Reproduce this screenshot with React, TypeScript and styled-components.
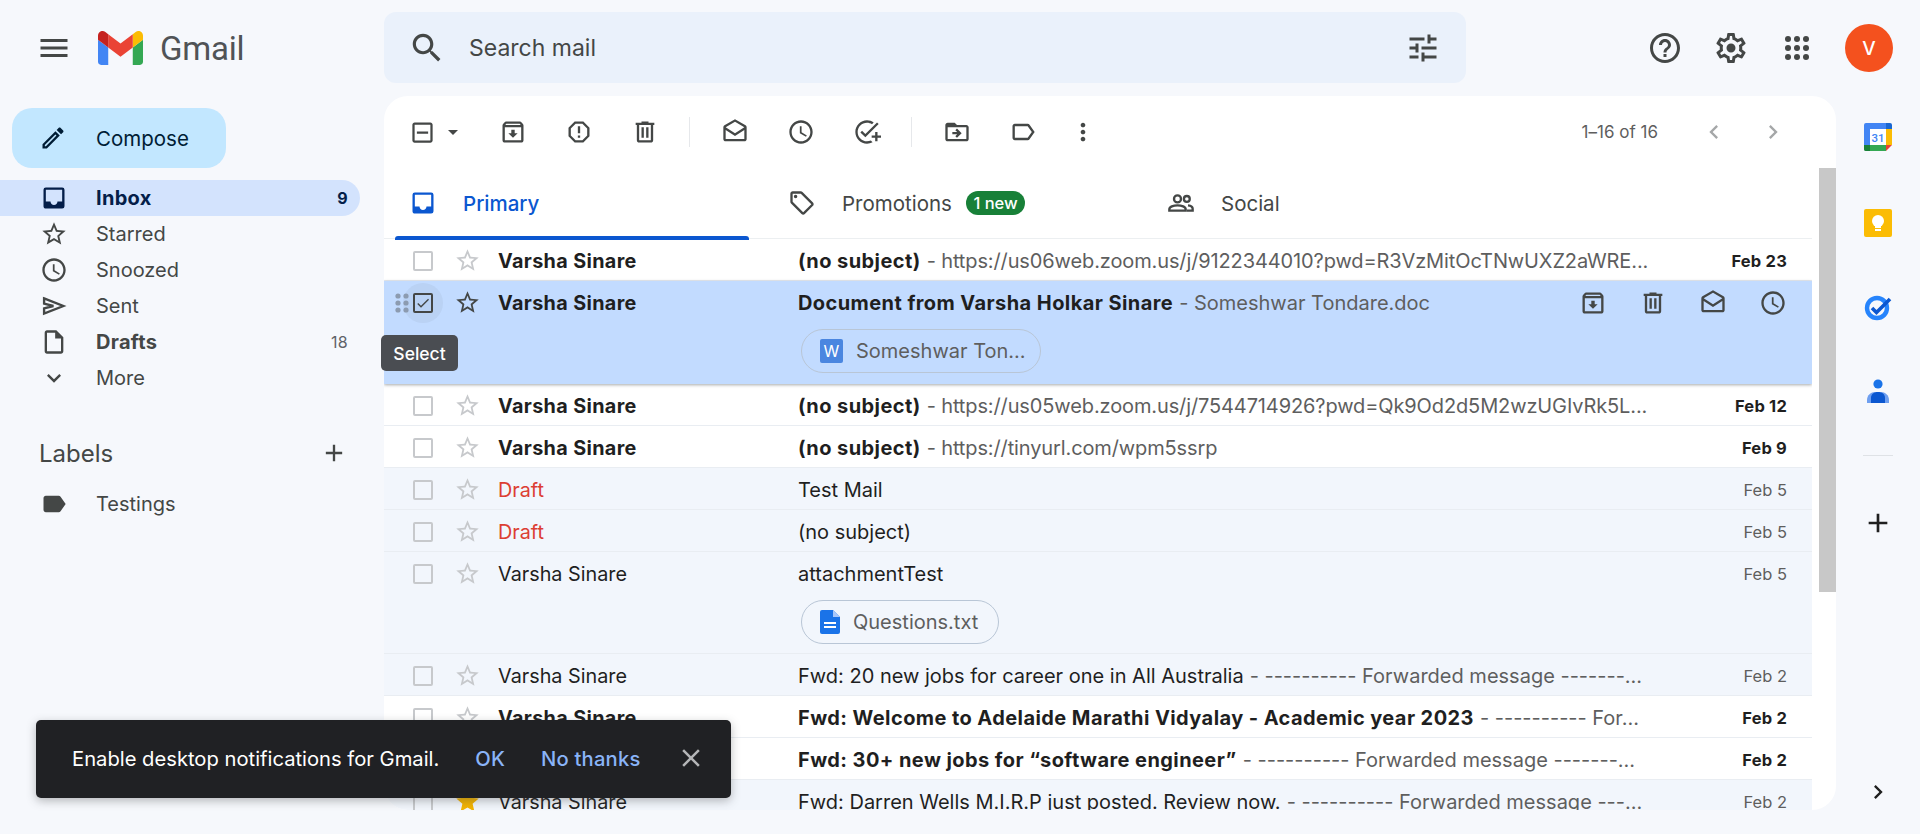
import React from "react";
import styled, { createGlobalStyle } from "styled-components";

const GlobalStyle = createGlobalStyle`
  html, body { margin: 0; padding: 0; background: #f6f8fc; }
  * { box-sizing: border-box; }
`;

const FONT = `Inter, Roboto, "Liberation Sans", sans-serif`;

const P = {
  menu: "M3 18h18v-2H3v2zm0-5h18v-2H3v2zm0-7v2h18V6H3z",
  search: "M15.5 14h-.79l-.28-.27C15.41 12.59 16 11.11 16 9.5 16 5.91 13.09 3 9.5 3S3 5.91 3 9.5 5.91 16 9.5 16c1.61 0 3.09-.59 4.23-1.57l.27.28v.79l5 4.99L20.49 19l-4.99-5zm-6 0C7.01 14 5 11.99 5 9.5S7.01 5 9.5 5 14 7.01 14 9.5 11.99 14 9.5 14z",
  tune: "M3 17v2h6v-2H3zM3 5v2h10V5H3zm10 16v-2h8v-2h-8v-2h-2v6h2zM7 9v2H3v2h4v2h2V9H7zm14 4v-2H11v2h10zm-6-4h2V7h4V5h-4V3h-2v6z",
  help: "M11 18h2v-2h-2v2zm1-16C6.48 2 2 6.48 2 12s4.48 10 10 10 10-4.48 10-10S17.52 2 12 2zm0 18c-4.41 0-8-3.59-8-8s3.59-8 8-8 8 3.59 8 8-3.59 8-8 8zm0-14c-2.21 0-4 1.79-4 4h2c0-1.1.9-2 2-2s2 .9 2 2c0 2-3 1.75-3 5h2c0-2.25 3-2.5 3-5 0-2.21-1.79-4-4-4z",
  gear: "M19.43 12.98c.04-.32.07-.64.07-.98 0-.34-.03-.66-.07-.98l2.11-1.65c.19-.15.24-.42.12-.64l-2-3.46c-.09-.16-.26-.25-.44-.25-.06 0-.12.01-.17.03l-2.49 1c-.52-.4-1.08-.73-1.69-.98l-.38-2.65C14.46 2.18 14.25 2 14 2h-4c-.25 0-.46.18-.49.42l-.38 2.65c-.61.25-1.17.59-1.69.98l-2.49-1c-.06-.02-.12-.03-.18-.03-.17 0-.34.09-.43.25l-2 3.46c-.13.22-.07.49.12.64l2.11 1.65c-.04.32-.07.65-.07.98 0 .33.03.66.07.98l-2.11 1.65c-.19.15-.24.42-.12.64l2 3.46c.09.16.26.25.44.25.06 0 .12-.01.17-.03l2.49-1c.52.4 1.08.73 1.69.98l.38 2.65c.03.24.24.42.49.42h4c.25 0 .46-.18.49-.42l.38-2.65c.61-.25 1.17-.59 1.69-.98l2.49 1c.06.02.12.03.18.03.17 0 .34-.09.43-.25l2-3.46c.12-.22.07-.49-.12-.64l-2.11-1.65zm-1.98-1.71c.04.31.05.52.05.73 0 .21-.02.43-.05.73l-.14 1.13.89.7 1.08.84-.7 1.21-1.27-.51-1.04-.42-.9.68c-.43.32-.84.56-1.25.73l-1.06.43-.16 1.13-.2 1.35h-1.4l-.19-1.35-.16-1.13-1.06-.43c-.43-.18-.83-.41-1.23-.71l-.91-.7-1.06.43-1.27.51-.7-1.21 1.08-.84.89-.7-.14-1.13c-.03-.31-.05-.54-.05-.74s.02-.43.05-.73l.14-1.13-.89-.7-1.08-.84.7-1.21 1.27.51 1.04.42.9-.68c.43-.32.84-.56 1.25-.73l1.06-.43.16-1.13.2-1.35h1.39l.19 1.35.16 1.13 1.06.43c.43.18.83.41 1.23.71l.91.7 1.06-.43 1.27-.51.7 1.21-1.07.85-.89.7.14 1.13zM12 9a3 3 0 1 0 0 6 3 3 0 0 0 0-6z",
  starBorder: "M22 9.24l-7.19-.62L12 2 9.19 8.63 2 9.24l5.46 4.73L5.82 21 12 17.27 18.18 21l-1.63-7.03L22 9.24zM12 15.4l-3.76 2.27 1-4.28-3.32-2.88 4.38-.38L12 6.1l1.71 4.04 4.38.38-3.32 2.88 1 4.28L12 15.4z",
  star: "M12 17.27L18.18 21l-1.64-7.03L22 9.24l-7.19-.61L12 2 9.19 8.63 2 9.24l5.46 4.73L5.82 21z",
  clock: "M11.99 2C6.47 2 2 6.48 2 12s4.47 10 9.99 10C17.52 22 22 17.52 22 12S17.52 2 11.99 2zM12 20c-4.42 0-8-3.58-8-8s3.58-8 8-8 8 3.58 8 8-3.58 8-8 8zm.5-13H11v6l5.25 3.15.75-1.23-4.5-2.67z",
  send: "M3.500 5.500L20 12 3.500 18.500V14l8-2-8-2z",
  file: "M14 2H6c-1.1 0-1.99.9-1.99 2L4 20c0 1.1.89 2 1.99 2H18c1.1 0 2-.9 2-2V8l-6-6zM6 20V4h7v5h5v11H6z",
  expand: "M16.59 8.59L12 13.17 7.41 8.59 6 10l6 6 6-6z",
  inbox: "M19 3H5a2 2 0 0 0-2 2v14c0 1.1.9 2 2 2h14a2 2 0 0 0 2-2V5a2 2 0 0 0-2-2zm0 12h-4c0 1.66-1.35 3-3 3s-3-1.34-3-3H5V5h14v10z",
  edit: "M3 17.25V21h3.75L17.81 9.94l-3.75-3.75L3 17.25zM5.92 19H5v-.92l9.06-9.06.92.92L5.92 19zM20.71 5.63l-2.34-2.34c-.2-.2-.45-.29-.71-.29s-.51.1-.7.29l-1.83 1.83 3.75 3.75 1.83-1.83c.39-.39.39-1.02 0-1.41z",
  add: "M19 13h-6v6h-2v-6H5v-2h6V5h2v6h6v2z",
  label: "M17.63 5.84C17.27 5.33 16.67 5 16 5L5 5.01C3.9 5.01 3 5.9 3 7v10c0 1.1.9 1.99 2 1.99L16 19c.67 0 1.27-.33 1.63-.84L22 12l-4.37-6.16z",
  labelLine: "M17.63 5.84C17.27 5.33 16.67 5 16 5L5 5.01C3.9 5.01 3 5.9 3 7v10c0 1.1.9 1.99 2 1.99L16 19c.67 0 1.27-.33 1.63-.84L22 12l-4.37-6.16zM16 17H5V7h11l3.55 5L16 17z",
  archive: "M20.54 5.23l-1.39-1.68C18.88 3.21 18.47 3 18 3H6c-.47 0-.88.21-1.16.55L3.46 5.23C3.17 5.57 3 6.02 3 6.5V19c0 1.1.9 2 2 2h14c1.1 0 2-.9 2-2V6.5c0-.48-.17-.93-.46-1.27zM6.24 5h11.52l.83 1H5.42l.82-1zM5 19V8h14v11H5zm8.45-9h-2.9v3H8l4 4 4-4h-2.55z",
  report: "M15.73 3H8.27L3 8.27v7.46L8.27 21h7.46L21 15.73V8.27L15.73 3zM19 14.9L14.9 19H9.1L5 14.9V9.1L9.1 5h5.8L19 9.1v5.8zM11 7h2v6h-2zM11 15h2v2h-2z",
  trash: "M15 4V3H9v1H4v2h1v13c0 1.1.9 2 2 2h10c1.1 0 2-.9 2-2V6h1V4h-5zm2 15H7V6h10v13zM9 8h2v9H9zm4 0h2v9h-2z",
  mailOpen: "M21.99 8c0-.72-.37-1.35-.94-1.7L12 1 2.95 6.3C2.38 6.65 2 7.28 2 8v10c0 1.1.9 2 2 2h16c1.1 0 2-.9 2-2l-.01-10zM12 3.32L19.99 8v.01L12 13 4 8l8-4.68zM4 18v-7.66l8 5.02 7.99-4.99L20 18H4z",
  addTask: "M22 5.18L10.59 16.6l-4.24-4.24 1.41-1.41 2.83 2.83 10-10L22 5.18zM12 20c-4.41 0-8-3.59-8-8s3.59-8 8-8c1.57 0 3.04.46 4.28 1.25l1.45-1.45C16.1 2.67 14.13 2 12 2 6.48 2 2 6.48 2 12s4.48 10 10 10c1.73 0 3.36-.44 4.78-1.22l-1.5-1.5c-1 .46-2.11.72-3.28.72zm7-5h-3v2h3v3h2v-3h3v-2h-3v-3h-2v3z",
  move: "M20 6h-8l-2-2H4c-1.1 0-1.99.9-1.99 2L2 18c0 1.1.9 2 2 2h16c1.1 0 2-.9 2-2V8c0-1.1-.9-2-2-2zm0 12H4V8h16v10zm-8.01-9l-1.41 1.41L12.16 12H8v2h4.16l-1.59 1.59L11.99 17 16 13.01 11.99 9z",
  more: "M12 8c1.1 0 2-.9 2-2s-.9-2-2-2-2 .9-2 2 .9 2 2 2zm0 2c-1.1 0-2 .9-2 2s.9 2 2 2 2-.9 2-2-.9-2-2-2zm0 6c-1.1 0-2 .9-2 2s.9 2 2 2 2-.9 2-2-.9-2-2-2z",
  left: "M15.41 7.41L14 6l-6 6 6 6 1.41-1.41L10.83 12z",
  right: "M10 6L8.59 7.41 13.17 12l-4.58 4.59L10 18l6-6z",
  tag: "M21.41 11.58l-9-9C12.05 2.22 11.55 2 11 2H4c-1.1 0-2 .9-2 2v7c0 .55.22 1.05.59 1.42l9 9c.36.36.86.58 1.41.58s1.05-.22 1.41-.59l7-7c.37-.36.59-.86.59-1.41s-.23-1.06-.59-1.42zM13 20.01L4 11V4h7v-.01l9 9-7 7.02zM6.5 5a1.5 1.5 0 1 0 0 3 1.5 1.5 0 0 0 0-3z",
  minusBox: "M19 3H5c-1.1 0-2 .9-2 2v14c0 1.1.9 2 2 2h14c1.1 0 2-.9 2-2V5c0-1.1-.9-2-2-2zm0 16H5V5h14v14zM7 11h10v2H7z",
  close: "M19 6.41L17.59 5 12 10.59 6.41 5 5 6.41 10.59 12 5 17.59 6.41 19 12 13.41 17.59 19 19 17.59 13.41 12z",
  caret: "M7 10l5 5 5-5z",
  check: "M9 16.17L4.83 12l-1.42 1.41L9 19 21 7l-1.41-1.41z",
};

const Svg = styled.svg<{ $size: number; $color?: string; $line?: boolean }>`
  width: ${(p) => p.$size}px;
  height: ${(p) => p.$size}px;
  flex: none;
  display: block;
  fill: ${(p) => (p.$line ? "none" : p.$color || "#444746")};
  stroke: ${(p) => (p.$line ? p.$color || "#444746" : "none")};
  stroke-width: ${(p) => (p.$line ? 2 : 0)};
`;

const Icon = ({ d, size = 28, color, line }: { d: string; size?: number; color?: string; line?: boolean }) => (
  <Svg viewBox="0 0 24 24" $size={size} $color={color} $line={line}>
    <path d={d} />
  </Svg>
);

const Page = styled.div`
  position: relative;
  width: 1920px;
  height: 834px;
  overflow: hidden;
  background: #f6f8fc;
  font-family: ${FONT};
  font-feature-settings: "calt" 0;
  color: #1f1f1f;
  display: grid;
  grid-template-columns: 384px 1452px 84px;
  grid-template-rows: 96px 714px;
`;

const Header = styled.header`
  grid-column: 1 / -1;
  display: flex;
  align-items: center;
`;

const Brand = styled.div`
  width: 384px;
  display: flex;
  align-items: center;
  padding-left: 36px;
`;

const BrandName = styled.span`
  font-family: Roboto, sans-serif;
  font-size: 33px;
  color: #505356;
  margin-left: 17px;
  letter-spacing: -0.2px;
`;

const LogoBox = styled.div`
  margin-left: 26px;
`;

const SearchBar = styled.div`
  width: 1082px;
  height: 71px;
  margin-bottom: 1px;
  background: #eaf1fb;
  border-radius: 12px;
  display: flex;
  align-items: center;
  padding: 0 25px 0 24px;
`;

const SearchText = styled.span`
  font-size: 23px;
  color: #444746;
  margin: 1px 0 0 23px;
  flex: 1;
`;

const HeaderIcons = styled.div`
  display: flex;
  align-items: center;
  margin-left: 181px;
  gap: 30px;
`;

const Avatar = styled.div`
  width: 48px;
  height: 48px;
  border-radius: 50%;
  background: #f4511e;
  color: #fff;
  font-size: 19px;
  font-weight: 500;
  display: flex;
  align-items: center;
  justify-content: center;
`;

const Sidebar = styled.nav`
  padding-top: 12px;
`;

const Compose = styled.div`
  margin-left: 12px;
  width: 214px;
  height: 60px;
  background: #c2e7ff;
  border-radius: 20px;
  display: flex;
  align-items: center;
  padding-left: 27px;
  gap: 29px;
  font-size: 20.5px;
  color: #001d35;
`;

const NavList = styled.div`
  margin-top: 12px;
`;

const NavItem = styled.div<{ $active?: boolean; $bold?: boolean }>`
  width: 360px;
  height: 36px;
  padding: 0 12px 0 40px;
  display: flex;
  align-items: center;
  gap: 28px;
  font-size: 20px;
  border-radius: 0 18px 18px 0;
  color: ${(p) => (p.$active ? "#041e49" : "#444746")};
  font-weight: ${(p) => (p.$bold ? 700 : 400)};
  letter-spacing: ${(p) => (p.$bold ? "0.3px" : "0")};
  background: ${(p) => (p.$active ? "#d3e3fd" : "transparent")};
`;

const NavLabel = styled.span`
  flex: 1;
`;

const NavCount = styled.span<{ $bold?: boolean }>`
  font-size: 16px;
  font-weight: ${(p) => (p.$bold ? 700 : 400)};
  color: ${(p) => (p.$bold ? "#041e49" : "#5f6368")};
`;

const LabelsHead = styled.div`
  margin-top: 35px;
  padding: 0 12px 0 39px;
  width: 360px;
  height: 44px;
  display: flex;
  align-items: center;
  justify-content: space-between;
  font-size: 24px;
  color: #444746;
`;

const LabelsList = styled.div`
  margin-top: 11px;
`;

const Panel = styled.main`
  background: #fff;
  border-radius: 24px 24px 24px 24px;
  overflow: hidden;
  display: flex;
  flex-direction: column;
  position: relative;
`;

const Toolbar = styled.div`
  height: 72px;
  flex: none;
  display: flex;
  align-items: center;
`;

const SelectGroup = styled.div`
  width: 96px;
  display: flex;
  align-items: center;
  padding-left: 25px;
  gap: 5px;
`;

const ToolSlot = styled.div<{ $w?: number }>`
  width: ${(p) => p.$w || 66}px;
  display: flex;
  justify-content: center;
  flex: none;
`;

const ToolDivider = styled.div`
  width: 1px;
  height: 30px;
  background: #e6e8eb;
  margin: 0 12px 0 11px;
  flex: none;
`;

const Pager = styled.div`
  margin-left: auto;
  display: flex;
  align-items: center;
  padding-right: 34px;
`;

const PagerText = styled.span`
  font-size: 17px;
  color: #5e5e5e;
  margin-right: 26px;
`;

const Body = styled.div`
  flex: 1;
  min-height: 0;
  display: flex;
  justify-content: space-between;
`;

const ListColumn = styled.div`
  width: 1428px;
  overflow: hidden;
`;

const ScrollTrack = styled.div`
  width: 17px;
  flex: none;
`;

const ScrollThumb = styled.div`
  height: 424px;
  background: #c8c8c8;
`;

const Tabs = styled.div`
  height: 71px;
  display: grid;
  grid-template-columns: repeat(3, 379px);
  border-bottom: 1px solid #eceff1;
`;

const Tab = styled.div<{ $active?: boolean }>`
  position: relative;
  display: flex;
  align-items: center;
  padding: 0 0 0 25px;
  font-size: 20.5px;
  font-weight: ${(p) => (p.$active ? 500 : 400)};
  color: ${(p) => (p.$active ? "#0b57d0" : "#444746")};
  ${(p) =>
    p.$active &&
    `&::after {
      content: "";
      position: absolute;
      left: 11px;
      right: 14px;
      bottom: -2px;
      height: 4px;
      background: #0b57d0;
      border-radius: 3px 3px 0 0;
      z-index: 2;
    }`}
`;

const TabLabel = styled.span`
  margin-left: 26px;
`;

const NewBadge = styled.span`
  margin-left: 14px;
  background: #188038;
  color: #fff;
  font-size: 16.5px;
  font-weight: 500;
  line-height: 24px;
  padding: 0 7.5px;
  border-radius: 12px;
`;

const Row = styled.div<{ $unread?: boolean; $selected?: boolean; $att?: boolean }>`
  position: relative;
  height: ${(p) => (p.$selected ? 103 : p.$att ? 102 : 42)}px;
  display: grid;
  grid-template-columns: 114px 300px 862px 1fr;
  grid-template-rows: 43px 1fr;
  padding-right: 25px;
  border-bottom: 1px solid #e9edf2;
  background: ${(p) => (p.$selected ? "#c2dbff" : p.$unread ? "#fff" : "#f2f6fc")};
  ${(p) => p.$selected && `z-index: 1; box-shadow: 0 1px 3px rgba(60,64,67,.45); border-bottom: 0;`}
`;

const Controls = styled.div`
  display: flex;
  align-items: center;
  padding-left: 29px;
`;

const StarSlot = styled.div`
  margin-left: 21px;
`;

const Check = styled.span<{ $on?: boolean }>`
  position: relative;
  width: 20px;
  height: 20px;
  flex: none;
  border: 2px solid ${(p) => (p.$on ? "#444746" : "#c7c9cc")};
  border-radius: 2px;
  display: flex;
  align-items: center;
  justify-content: center;
`;

const CheckHalo = styled.span`
  position: absolute;
  left: -12px;
  top: -12px;
  width: 40px;
  height: 40px;
  border-radius: 50%;
  background: rgba(60, 64, 67, 0.06);
`;

const DragDots = styled.svg`
  position: absolute;
  left: -20px;
  top: -2px;
  width: 14px;
  height: 20px;
  fill: #8c9bb0;
`;

const Sender = styled.div<{ $unread?: boolean; $draft?: boolean }>`
  display: flex;
  align-items: center;
  font-size: 19.8px;
  font-weight: ${(p) => (p.$unread ? 700 : 400)};
  letter-spacing: ${(p) => (p.$unread ? "0.35px" : "0")};
  color: ${(p) => (p.$draft ? "#dc3e33" : "#1f1f1f")};
`;

const Content = styled.div`
  display: flex;
  align-items: center;
  font-size: 20px;
  white-space: nowrap;
  overflow: hidden;
  min-width: 0;
`;

const Subject = styled.span<{ $unread?: boolean }>`
  font-weight: ${(p) => (p.$unread ? 700 : 400)};
  letter-spacing: ${(p) => (p.$unread ? "0.42px" : "0")};
  color: #1f1f1f;
  flex: none;
`;

const Snippet = styled.span<{ $tight?: boolean }>`
  color: #5e5e5e;
  margin-left: 6px;
  letter-spacing: ${(p) => (p.$tight ? "-0.12px" : "0")};
  overflow: hidden;
  text-overflow: ellipsis;
`;

const DateCell = styled.div<{ $unread?: boolean }>`
  display: flex;
  align-items: center;
  justify-content: flex-end;
  font-size: 16.5px;
  font-weight: ${(p) => (p.$unread ? 700 : 400)};
  letter-spacing: ${(p) => (p.$unread ? "0.2px" : "0")};
  color: ${(p) => (p.$unread ? "#1f1f1f" : "#5e5e5e")};
`;

const RowActions = styled.div`
  position: absolute;
  right: 25px;
  top: 8px;
  display: flex;
  gap: 32px;
`;

const Chip = styled.div<{ $w: number }>`
  grid-column: 3;
  grid-row: 2;
  margin: 5px 0 0 3px;
  width: ${(p) => p.$w}px;
  height: 44px;
  border: 1px solid #b9c6d6;
  border-radius: 22px;
  display: flex;
  align-items: center;
  padding-left: 18px;
  gap: 13px;
  font-size: 20px;
  color: #5e5e5e;
  white-space: nowrap;
`;

const WordBadge = styled.span`
  width: 23px;
  height: 24px;
  border-radius: 2px;
  background: #4a86e0;
  color: #fff;
  font-size: 16px;
  display: flex;
  align-items: center;
  justify-content: center;
`;

const Rail = styled.aside`
  display: flex;
  flex-direction: column;
  align-items: center;
  padding: 27px 0 0 0;
  position: relative;
`;

const RailItem = styled.div<{ $h: number }>`
  height: ${(p) => p.$h}px;
  display: flex;
  align-items: flex-start;
  justify-content: center;
`;

const RailDivider = styled.div`
  width: 30px;
  height: 1px;
  background: #dfe2e6;
  margin-bottom: 51px;
`;

const RailChevron = styled.div`
  margin-top: 211px;
`;

const Tooltip = styled.div`
  position: absolute;
  left: 381px;
  top: 335px;
  width: 77px;
  height: 36px;
  background: #4a4d52;
  border-radius: 5px;
  color: #fff;
  font-size: 17.5px;
  font-weight: 500;
  display: flex;
  align-items: center;
  justify-content: center;
  z-index: 3;
`;

const Toast = styled.div`
  position: absolute;
  left: 36px;
  top: 720px;
  width: 695px;
  height: 78px;
  padding: 0 0 2px 36px;
  background: #202124;
  border-radius: 5px;
  box-shadow: 0 3px 10px rgba(60, 64, 67, 0.35);
  color: #fff;
  font-size: 20.2px;
  display: flex;
  align-items: center;
  white-space: nowrap;
  z-index: 4;
`;

const ToastLink = styled.span<{ $gap: number }>`
  color: #8ab4f8;
  font-weight: 500;
  letter-spacing: 0.2px;
  margin-left: ${(p) => p.$gap}px;
`;

const ToastClose = styled.div`
  margin-left: 36px;
`;

const rows = [
  { sender: "Varsha Sinare", subject: "(no subject)", snippet: "https://us06web.zoom.us/j/9122344010?pwd=R3VzMitOcTNwUXZ2aWRE...", date: "Feb 23", unread: true },
  { sender: "Varsha Sinare", subject: "Document from Varsha Holkar Sinare", snippet: "Someshwar Tondare.doc", date: "", unread: true, selected: true },
  { sender: "Varsha Sinare", subject: "(no subject)", snippet: "https://us05web.zoom.us/j/7544714926?pwd=Qk9Od2d5M2wzUGIvRk5L...", date: "Feb 12", unread: true },
  { sender: "Varsha Sinare", subject: "(no subject)", snippet: "https://tinyurl.com/wpm5ssrp", date: "Feb 9", unread: true },
  { sender: "Draft", subject: "Test Mail", date: "Feb 5", draft: true },
  { sender: "Draft", subject: "(no subject)", date: "Feb 5", draft: true },
  { sender: "Varsha Sinare", subject: "attachmentTest", date: "Feb 5", chip: "txt" },
  { sender: "Varsha Sinare", subject: "Fwd: 20 new jobs for career one in All Australia", snippet: "---------- Forwarded message -------...", date: "Feb 2" },
  { sender: "Varsha Sinare", subject: "Fwd: Welcome to Adelaide Marathi Vidyalay - Academic year 2023", snippet: "---------- For...", date: "Feb 2", unread: true },
  { sender: "Varsha Sinare", subject: "Fwd: 30+ new jobs for “software engineer”", snippet: "---------- Forwarded message -------...", date: "Feb 2", unread: true },
  { sender: "Varsha Sinare", subject: "Fwd: Darren Wells M.I.R.P just posted. Review now.", snippet: "---------- Forwarded message ---...", date: "Feb 2", starred: true },
] as Array<{
  sender: string;
  subject: string;
  snippet?: string;
  date: string;
  unread?: boolean;
  selected?: boolean;
  draft?: boolean;
  chip?: string;
  starred?: boolean;
}>;

const navItems = [
  { label: "Inbox", d: P.inbox, count: "9", active: true, bold: true, color: "#041e49" },
  { label: "Starred", d: P.starBorder },
  { label: "Snoozed", d: P.clock },
  { label: "Sent", d: P.send, line: true },
  { label: "Drafts", d: P.file, count: "18", bold: true },
  { label: "More", d: P.expand },
];

const GmailLogo = () => (
  <svg width="45" height="34" viewBox="52 42 88 66" style={{ display: "block" }}>
    <path fill="#4285f4" d="M58 108h14V74L52 59v43c0 3.32 2.69 6 6 6" />
    <path fill="#34a853" d="M120 108h14c3.32 0 6-2.69 6-6V59l-20 15" />
    <path fill="#fbbc04" d="M120 48v26l20-15v-8c0-7.42-8.47-11.65-14.4-7.2" />
    <path fill="#ea4335" d="M72 74V48l24 18 24-18v26L96 92" />
    <path fill="#c5221f" d="M52 51v8l20 15V48l-5.6-4.2c-5.94-4.45-14.4-.22-14.4 7.2" />
  </svg>
);

const CalendarIcon = () => (
  <svg width="28" height="28" viewBox="0 0 28 28">
    <path fill="#4285f4" d="M2 0h20v6H6v16H0V2a2 2 0 0 1 2-2z" />
    <path fill="#1967d2" d="M22 0h4a2 2 0 0 1 2 2v4h-6z" />
    <path fill="#fbbc04" d="M22 6h6v16h-6z" />
    <path fill="#34a853" d="M6 22h16v6H2a2 2 0 0 1-2-2v-4z" />
    <path fill="#188038" d="M0 22h6v6H2a2 2 0 0 1-2-2z" />
    <path fill="#ea4335" d="M22 22h6l-6 6z" />
    <rect x="6" y="6" width="16" height="16" fill="#fff" />
    <text x="14" y="19" textAnchor="middle" fontSize="11.5" fontWeight="500" fontFamily="Roboto, sans-serif" fill="#4285f4">31</text>
  </svg>
);

const KeepIcon = () => (
  <svg width="28" height="28" viewBox="0 0 28 28">
    <rect width="28" height="28" rx="2" fill="#fbbc04" />
    <circle cx="14" cy="12" r="6" fill="#fff" />
    <rect x="11" y="17" width="6" height="2" fill="#fff" />
    <rect x="11" y="20" width="6" height="2" fill="#fff" />
  </svg>
);

const TasksIcon = () => (
  <svg width="28" height="28" viewBox="0 0 28 28">
    <circle cx="13" cy="15" r="10" fill="none" stroke="#2684fc" strokeWidth="4.4" />
    <path d="M8 15l4.5 4.5L26 6" fill="none" stroke="#0b57d0" strokeWidth="3.6" />
  </svg>
);

const ContactsIcon = () => (
  <svg width="28" height="28" viewBox="0 0 28 28">
    <circle cx="14" cy="7" r="4.6" fill="#1a73e8" />
    <path d="M3 26v-3c0-5 4-8 8-8h6c4 0 8 3 8 8v3z" fill="#6e9ff0" />
    <path d="M7 26v-5c0-4 3-6 7-6s7 2 7 6v5z" fill="#0b57d0" />
  </svg>
);

const DocIcon = () => (
  <svg width="20" height="24" viewBox="0 0 20 24">
    <path fill="#1a73e8" d="M2 0h11l7 7v15a2 2 0 0 1-2 2H2a2 2 0 0 1-2-2V2a2 2 0 0 1 2-2z" />
    <path fill="#fff" d="M4 12h12v2H4zM4 16h12v2H4z" />
    <path fill="#a8c7fa" d="M13 0l7 7h-7z" />
  </svg>
);

const SocialIcon = () => (
  <Svg viewBox="0 0 24 24" $size={28} $color="none">
    <g fill="none" stroke="#444746" strokeWidth="2">
      <circle cx="9" cy="8.5" r="3" />
      <path d="M2 18.5v-1.2c0-2 3.5-3.3 7-3.3s7 1.300 7 3.300v1.200z" />
      <circle cx="17" cy="8.500" r="2.500" />
      <path d="M18 14c2 .2 4 1.300 4 3v1.500h-5" />
    </g>
  </Svg>
);

const Dots = () => (
  <DragDots viewBox="0 0 14 20">
    {[3, 10, 17].map((y) =>
      [3, 11].map((x) => <circle key={`${x}-${y}`} cx={x} cy={y} r="2.600" />)
    )}
  </DragDots>
);

const AppsIcon = () => (
  <Svg viewBox="0 0 24 24" $size={36}>
    {[6, 12, 18].map((y) =>
      [6, 12, 18].map((x) => <circle key={`${x}-${y}`} cx={x} cy={y} r="2" />)
    )}
  </Svg>
);

export default function App() {
  return (
    <Page>
      <GlobalStyle />
      <Header>
        <Brand>
          <Icon d={P.menu} size={36} />
          <LogoBox>
            <GmailLogo />
          </LogoBox>
          <BrandName>Gmail</BrandName>
        </Brand>
        <SearchBar>
          <Icon d={P.search} size={38} />
          <SearchText>Search mail</SearchText>
          <Icon d={P.tune} size={36} />
        </SearchBar>
        <HeaderIcons>
          <Icon d={P.help} size={36} />
          <Icon d={P.gear} size={36} />
          <AppsIcon />
          <Avatar>V</Avatar>
        </HeaderIcons>
      </Header>

      <Sidebar>
        <Compose>
          <Icon d={P.edit} size={28} color="#001d35" />
          Compose
        </Compose>
        <NavList>
          {navItems.map((n) => (
            <NavItem key={n.label} $active={n.active} $bold={n.bold}>
              <Icon d={n.d} size={28} color={n.color} line={n.line} />
              <NavLabel>{n.label}</NavLabel>
              {n.count && <NavCount $bold={n.active}>{n.count}</NavCount>}
            </NavItem>
          ))}
        </NavList>
        <LabelsHead>
          Labels
          <Icon d={P.add} size={28} />
        </LabelsHead>
        <LabelsList>
          <NavItem>
            <Icon d={P.label} size={28} />
            <NavLabel>Testings</NavLabel>
          </NavItem>
        </LabelsList>
      </Sidebar>

      <Panel>
        <Toolbar>
          <SelectGroup>
            <Icon d={P.minusBox} size={27} />
            <Icon d={P.caret} size={24} />
          </SelectGroup>
          <ToolSlot><Icon d={P.archive} /></ToolSlot>
          <ToolSlot><Icon d={P.report} /></ToolSlot>
          <ToolSlot><Icon d={P.trash} /></ToolSlot>
          <ToolDivider />
          <ToolSlot><Icon d={P.mailOpen} /></ToolSlot>
          <ToolSlot><Icon d={P.clock} /></ToolSlot>
          <ToolSlot><Icon d={P.addTask} /></ToolSlot>
          <ToolDivider />
          <ToolSlot><Icon d={P.move} /></ToolSlot>
          <ToolSlot><Icon d={P.labelLine} /></ToolSlot>
          <ToolSlot $w={54}><Icon d={P.more} /></ToolSlot>
          <Pager>
            <PagerText>1–16 of 16</PagerText>
            <ToolSlot $w={59}><Icon d={P.left} color="#a5a7a8" /></ToolSlot>
            <ToolSlot $w={59}><Icon d={P.right} color="#a5a7a8" /></ToolSlot>
          </Pager>
        </Toolbar>
        <Body>
          <ListColumn>
            <Tabs>
              <Tab $active>
                <Icon d={P.inbox} color="#0b57d0" />
                <TabLabel>Primary</TabLabel>
              </Tab>
              <Tab>
                <Icon d={P.tag} />
                <TabLabel>Promotions</TabLabel>
                <NewBadge>1 new</NewBadge>
              </Tab>
              <Tab>
                <SocialIcon />
                <TabLabel>Social</TabLabel>
              </Tab>
            </Tabs>
            {rows.map((r, i) => (
              <Row key={i} $unread={r.unread} $selected={r.selected} $att={!!r.chip}>
                <Controls>
                  <Check $on={r.selected}>
                    {r.selected && (
                      <>
                        <CheckHalo />
                        <Dots />
                        <Icon d={P.check} size={16} />
                      </>
                    )}
                  </Check>
                  <StarSlot>
                    <Icon
                      d={r.starred ? P.star : P.starBorder}
                      size={27}
                      color={r.starred ? "#f4b400" : r.selected ? "#444746" : "#c7c9cc"}
                    />
                  </StarSlot>
                </Controls>
                <Sender $unread={r.unread} $draft={r.draft}>{r.sender}</Sender>
                <Content>
                  <Subject $unread={r.unread}>{r.subject}</Subject>
                  {r.snippet && <Snippet $tight={r.snippet.startsWith("http")}>- {r.snippet}</Snippet>}
                </Content>
                <DateCell $unread={r.unread}>{r.date}</DateCell>
                {r.selected && (
                  <RowActions>
                    <Icon d={P.archive} />
                    <Icon d={P.trash} />
                    <Icon d={P.mailOpen} />
                    <Icon d={P.clock} />
                  </RowActions>
                )}
                {r.selected && (
                  <Chip $w={240}>
                    <WordBadge>W</WordBadge>
                    Someshwar Ton...
                  </Chip>
                )}
                {r.chip && (
                  <Chip $w={198}>
                    <DocIcon />
                    Questions.txt
                  </Chip>
                )}
              </Row>
            ))}
          </ListColumn>
          <ScrollTrack>
            <ScrollThumb />
          </ScrollTrack>
        </Body>
      </Panel>

      <Rail>
        <RailItem $h={86}><CalendarIcon /></RailItem>
        <RailItem $h={84}><KeepIcon /></RailItem>
        <RailItem $h={84}><TasksIcon /></RailItem>
        <RailItem $h={78}><ContactsIcon /></RailItem>
        <RailDivider />
        <RailItem $h={60}><Icon d={P.add} size={32} color="#1f1f1f" /></RailItem>
        <RailChevron><Icon d={P.right} size={28} color="#1f1f1f" /></RailChevron>
      </Rail>

      <Tooltip>Select</Tooltip>
      <Toast>
        Enable desktop notifications for Gmail.
        <ToastLink $gap={36}>OK</ToastLink>
        <ToastLink $gap={36}>No thanks</ToastLink>
        <ToastClose><Icon d={P.close} size={30} color="#b5b6b8" /></ToastClose>
      </Toast>
    </Page>
  );
}
